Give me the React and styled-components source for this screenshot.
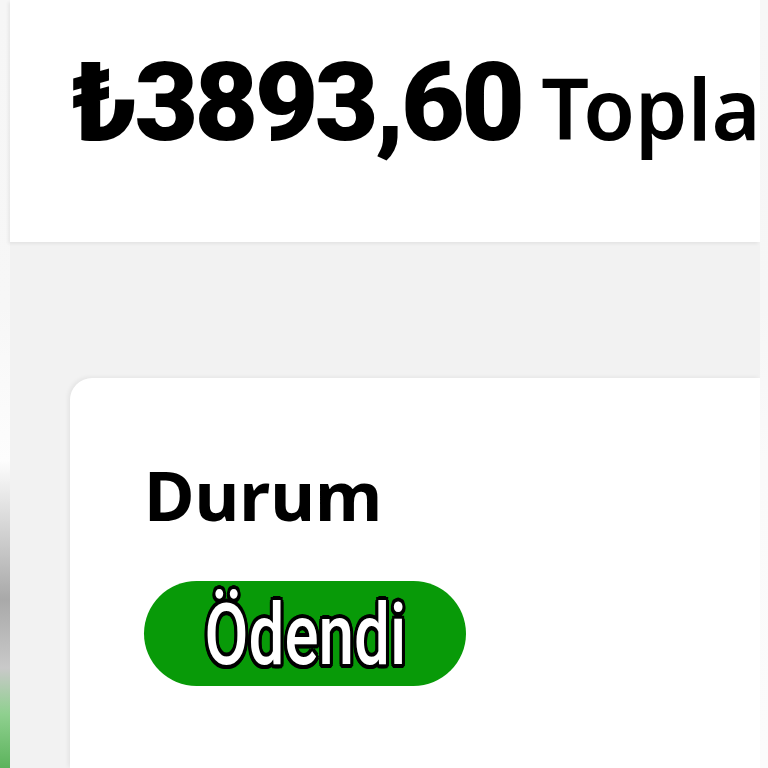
import styled, { createGlobalStyle } from 'styled-components'

const GlobalStyle = createGlobalStyle`
  html, body {
    margin: 0;
    padding: 0;
    background: #f2f2f2;
    overflow: hidden;
  }
  * { box-sizing: border-box; }
`

const Screen = styled.div`
  width: 768px;
  height: 768px;
  display: flex;
  overflow: hidden;
  background: #f2f2f2;
`

const LeftEdge = styled.div`
  width: 10px;
  flex-shrink: 0;
  background: linear-gradient(
    to bottom,
    #f6f6f6 0%,
    #f7f7f7 40%,
    #fdfdfd 60%,
    #d8d8d8 68%,
    #a9a9a9 78%,
    #c9c9c9 87%,
    #8fd08f 93%,
    #5cb35c 100%
  );
`

const RightEdge = styled.div`
  width: 8px;
  flex-shrink: 0;
  background: linear-gradient(to bottom, #f7f7f7 0%, #f6f6f6 40%, #fafafa 60%, #fbfbfb 100%);
`

const Main = styled.div`
  flex: 1;
  display: flex;
  flex-direction: column;
  min-width: 0;
`

const TotalCard = styled.div`
  height: 242px;
  background: #fff;
  display: flex;
  align-items: baseline;
  gap: 20px;
  padding: 38px 0 0 61px;
  white-space: nowrap;
  overflow: hidden;
  box-shadow: -2px 2px 3px rgba(0, 0, 0, 0.06);
`

const Amount = styled.span`
  font-family: Roboto, "Noto Sans", sans-serif;
  font-weight: 900;
  font-size: 110px;
  letter-spacing: -3.6px;
  color: #000;
`

const AmountLabel = styled.span`
  font-family: "Noto Sans", "Open Sans", sans-serif;
  font-weight: 600;
  font-size: 84px;
  color: #000;
`

const Content = styled.div`
  flex: 1;
  padding: 136px 0 0 60px;
  display: flex;
`

const StatusCard = styled.div`
  flex: 1;
  background: #fff;
  border-radius: 22px 0 0 0;
  box-shadow: -2px -1px 4px rgba(0, 0, 0, 0.06);
  padding: 82px 0 0 74px;
  display: flex;
  flex-direction: column;
  align-items: flex-start;
`

const SectionTitle = styled.h2`
  margin: 0;
  font-family: "Noto Sans", "Open Sans", sans-serif;
  font-weight: 700;
  font-size: 69px;
  line-height: 1;
  color: #000;
`

const Badge = styled.div`
  margin-top: 52px;
  width: 322px;
  height: 105px;
  border-radius: 53px;
  background: ${p => p.$color};
  display: flex;
  align-items: center;
  justify-content: center;
`

const BadgeText = styled.span`
  display: inline-block;
  font-family: Roboto, sans-serif;
  font-weight: 500;
  font-size: 85px;
  line-height: 1;
  color: #fff;
  transform: translateY(2px) scaleX(0.75);
  text-shadow:
    4px 0 0 #000, -4px 0 0 #000, 0 4px 0 #000, 0 -4px 0 #000,
    3px 3px 0 #000, -3px -3px 0 #000, 3px -3px 0 #000, -3px 3px 0 #000,
    2px 4px 0 #000, -2px 4px 0 #000, 4px 2px 0 #000, -4px 2px 0 #000;
`

export default function App() {
  return (
    <>
      <GlobalStyle />
      <Screen>
        <LeftEdge />
        <Main>
          <TotalCard>
            <Amount>₺3893,60</Amount>
            <AmountLabel>Toplam</AmountLabel>
          </TotalCard>
          <Content>
            <StatusCard>
              <SectionTitle>Durum</SectionTitle>
              <Badge $color="#089a08">
                <BadgeText>Ödendi</BadgeText>
              </Badge>
            </StatusCard>
          </Content>
        </Main>
        <RightEdge />
      </Screen>
    </>
  )
}
